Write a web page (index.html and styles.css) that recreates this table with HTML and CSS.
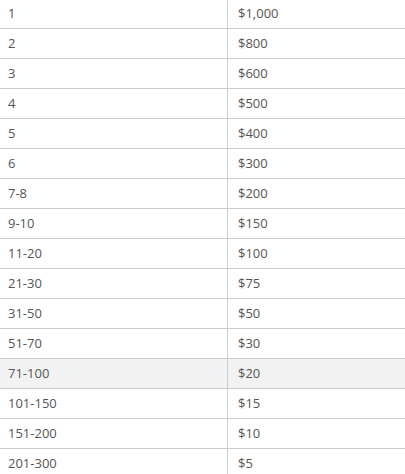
FILE: index.html
```html
<!DOCTYPE html>
<html>
<head>
<meta charset="utf-8">
<link rel="stylesheet" href="styles.css">
</head>
<body>
<table class="prizes">
<tbody>
<tr><td>1</td><td>$1,000</td></tr>
<tr><td>2</td><td>$800</td></tr>
<tr><td>3</td><td>$600</td></tr>
<tr><td>4</td><td>$500</td></tr>
<tr><td>5</td><td>$400</td></tr>
<tr><td>6</td><td>$300</td></tr>
<tr><td>7-8</td><td>$200</td></tr>
<tr><td>9-10</td><td>$150</td></tr>
<tr><td>11-20</td><td>$100</td></tr>
<tr><td>21-30</td><td>$75</td></tr>
<tr><td>31-50</td><td>$50</td></tr>
<tr><td>51-70</td><td>$30</td></tr>
<tr class="hl"><td>71-100</td><td>$20</td></tr>
<tr><td>101-150</td><td>$15</td></tr>
<tr><td>151-200</td><td>$10</td></tr>
<tr><td>201-300</td><td>$5</td></tr>
</tbody>
</table>
</body>
</html>
```
FILE: styles.css
```css
html, body {
  margin: 0;
  padding: 0;
  background: #fff;
  overflow: hidden;
}
.prizes {
  border-collapse: collapse;
  width: 405px;
  margin-top: -1px;
  font-family: "Open Sans", sans-serif;
  font-size: 13px;
  color: #555;
  table-layout: fixed;
}
.prizes td {
  height: 19px;
  line-height: 19px;
  padding: 5px 8px;
  border-bottom: 1px solid #ccc;
  text-align: left;
}
.prizes td:first-child {
  width: 211px;
  border-right: 1px solid #ccc;
}
.prizes td:last-child {
  padding-left: 10px;
}
.prizes tr.hl td {
  background: #f2f2f2;
}
```
